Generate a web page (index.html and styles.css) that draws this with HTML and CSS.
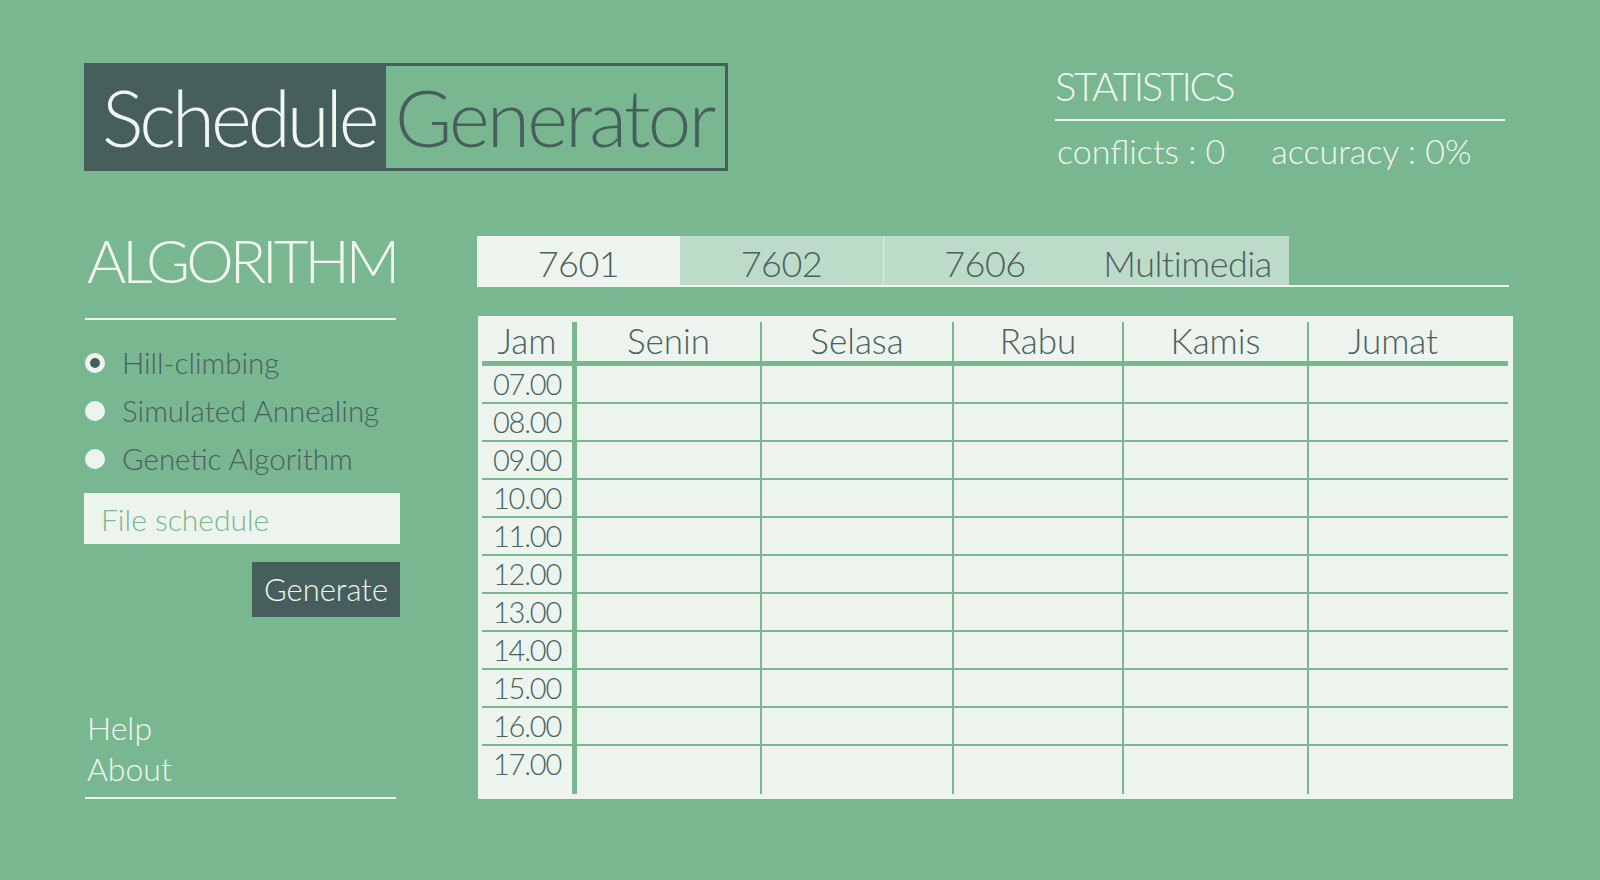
FILE: index.html
```html
<!DOCTYPE html>
<html lang="id">
<head>
<meta charset="utf-8">
<title>Schedule Generator</title>
<link rel="stylesheet" href="styles.css">
</head>
<body>
<header class="topbar">
  <div class="brand">
    <span class="brand-dark">Schedule</span>
    <span class="brand-light">Generator</span>
  </div>
  <section class="stats">
    <h2 class="stats-title">STATISTICS</h2>
    <div class="stats-values">
      <span class="stat">conflicts : 0</span>
      <span class="stat">accuracy : 0%</span>
    </div>
  </section>
</header>

<main class="main">
  <aside class="sidebar">
    <h1 class="algo-title">ALGORITHM</h1>
    <ul class="radio-list">
      <li class="radio-item"><span class="radio checked"></span><span class="radio-label">Hill-climbing</span></li>
      <li class="radio-item"><span class="radio"></span><span class="radio-label">Simulated Annealing</span></li>
      <li class="radio-item"><span class="radio"></span><span class="radio-label">Genetic Algorithm</span></li>
    </ul>
    <input class="file-input" type="text" placeholder="File schedule">
    <div class="btn-row"><button class="generate-btn">Generate</button></div>
    <nav class="bottom-links">
      <a class="link">Help</a>
      <a class="link">About</a>
    </nav>
  </aside>

  <section class="content">
    <div class="tabs">
      <div class="tab active">7601</div>
      <div class="tab">7602</div>
      <div class="tab sep">7606</div>
      <div class="tab">Multimedia</div>
    </div>

    <div class="table-card">
      <div class="grid">
        <div class="cell head jam">Jam</div>
        <div class="cell head">Senin</div>
        <div class="cell head">Selasa</div>
        <div class="cell head">Rabu</div>
        <div class="cell head">Kamis</div>
        <div class="cell head last">Jumat</div>

        <div class="cell time jam">07.00</div><div class="cell"></div><div class="cell"></div><div class="cell"></div><div class="cell"></div><div class="cell"></div>
        <div class="cell time jam">08.00</div><div class="cell"></div><div class="cell"></div><div class="cell"></div><div class="cell"></div><div class="cell"></div>
        <div class="cell time jam">09.00</div><div class="cell"></div><div class="cell"></div><div class="cell"></div><div class="cell"></div><div class="cell"></div>
        <div class="cell time jam">10.00</div><div class="cell"></div><div class="cell"></div><div class="cell"></div><div class="cell"></div><div class="cell"></div>
        <div class="cell time jam">11.00</div><div class="cell"></div><div class="cell"></div><div class="cell"></div><div class="cell"></div><div class="cell"></div>
        <div class="cell time jam">12.00</div><div class="cell"></div><div class="cell"></div><div class="cell"></div><div class="cell"></div><div class="cell"></div>
        <div class="cell time jam">13.00</div><div class="cell"></div><div class="cell"></div><div class="cell"></div><div class="cell"></div><div class="cell"></div>
        <div class="cell time jam">14.00</div><div class="cell"></div><div class="cell"></div><div class="cell"></div><div class="cell"></div><div class="cell"></div>
        <div class="cell time jam">15.00</div><div class="cell"></div><div class="cell"></div><div class="cell"></div><div class="cell"></div><div class="cell"></div>
        <div class="cell time jam">16.00</div><div class="cell"></div><div class="cell"></div><div class="cell"></div><div class="cell"></div><div class="cell"></div>
        <div class="cell time jam">17.00</div><div class="cell"></div><div class="cell"></div><div class="cell"></div><div class="cell"></div><div class="cell"></div>
      </div>
    </div>
  </section>
</main>
</body>
</html>
```

FILE: styles.css
```css
* { box-sizing: border-box; }

html, body {
  margin: 0;
  padding: 0;
}

body {
  width: 1600px;
  height: 880px;
  overflow: hidden;
  background: #79b791;
  font-family: "Lato", "Liberation Sans", sans-serif;
  font-weight: 300;
  color: #4a605e;
}

/* ---------- top bar ---------- */
.topbar {
  display: flex;
  align-items: flex-start;
  padding: 63px 0 0 84px;
}

.brand {
  display: flex;
  width: 644px;
  height: 108px;
  border: 3px solid #465f5c;
}

.brand-dark,
.brand-light {
  font-size: 78px;
  line-height: 102px;
  letter-spacing: -4px;
  white-space: nowrap;
}

.brand-dark {
  width: 299px;
  padding-left: 15px;
  background: #465f5c;
  color: #f2f6f1;
}

.brand-light {
  flex: 1;
  padding-left: 9px;
  letter-spacing: -2.7px;
  color: #465f5c;
}

.stats {
  margin-left: 327px;
  width: 450px;
  color: #f0f5ef;
}

.stats-title {
  margin: 3px 0 0;
  padding-bottom: 13px;
  border-bottom: 2px solid #f0f5ef;
  font-size: 40px;
  line-height: 40px;
  font-weight: 300;
  letter-spacing: -2.4px;
}

.stats-values {
  display: flex;
  gap: 46px;
  margin-top: 13px;
  padding-left: 2px;
}

.stat {
  font-size: 34px;
  line-height: 34px;
}

/* ---------- main ---------- */
.main {
  display: grid;
  grid-template-columns: 316px 1036px;
  column-gap: 77px;
  margin-top: 65px;
  padding-left: 84px;
}

.sidebar {
  display: flex;
  flex-direction: column;
}

.algo-title {
  margin: -3px 4px 0 1px;
  padding: 0 0 31px 2px;
  border-bottom: 2px solid #f0f5ef;
  font-size: 60px;
  line-height: 54px;
  font-weight: 300;
  letter-spacing: -4px;
  color: #f2f6f1;
}

.radio-list {
  list-style: none;
  margin: 19px 0 0;
  padding: 0;
}

.radio-item {
  display: flex;
  align-items: center;
  height: 48px;
}

.radio {
  width: 20px;
  height: 20px;
  margin-left: 1px;
  border-radius: 50%;
  background: #edf4ed;
  flex: none;
}

.radio.checked {
  border: 5px solid #edf4ed;
  background: #465f5c;
}

.radio-label {
  margin-left: 17px;
  font-size: 29.5px;
  line-height: 48px;
  color: #4a605e;
}

.file-input {
  display: block;
  width: 316px;
  height: 51px;
  margin-top: 10px;
  padding: 0 0 0 17px;
  border: none;
  outline: none;
  background: #edf4ed;
  font-family: inherit;
  font-weight: 300;
  font-size: 30px;
  color: #4a605e;
}

.file-input::placeholder {
  color: #79b791;
  opacity: 1;
}

.btn-row {
  display: flex;
  justify-content: flex-end;
  margin-top: 18px;
}

.generate-btn {
  width: 148px;
  height: 55px;
  padding: 0;
  border: none;
  background: #465f5c;
  color: #f2f6f1;
  font-family: inherit;
  font-weight: 300;
  font-size: 31px;
  line-height: 53px;
}

.bottom-links {
  display: flex;
  flex-direction: column;
  margin: auto 4px 0 1px;
  padding: 0 0 8px 2px;
  border-bottom: 2px solid #f0f5ef;
}

.link {
  font-size: 32px;
  line-height: 41px;
  color: #f2f6f1;
}

/* ---------- tabs ---------- */
.content {
  display: flex;
  flex-direction: column;
}

.tabs {
  display: flex;
  width: 1032px;
  border-bottom: 2px solid #f0f5ef;
}

.tab {
  width: 203px;
  height: 49px;
  padding-top: 5px;
  background: #bcdbc8;
  text-align: center;
  font-size: 36px;
  line-height: 44px;
  letter-spacing: -0.5px;
  color: #4a605e;
}

.tab.active {
  background: #edf4ed;
}

.tab.sep {
  border-left: 1px solid #dcece2;
}

/* ---------- table ---------- */
.table-card {
  width: 1035px;
  margin: 29px 0 0 1px;
  padding: 6px 5px 5px 4px;
  background: #edf4ed;
}

.grid {
  display: grid;
  grid-template-columns: 93px 183px 190px 168px 183px 199px;
  grid-template-rows: 42px repeat(10, 36px) 48px;
  column-gap: 2px;
  row-gap: 2px;
  background: #79b791;
}

.cell {
  background: #edf4ed;
}

.cell.jam {
  border-right: 3px solid #79b791;
}

.cell.head {
  border-bottom: 3px solid #79b791;
  text-align: center;
  font-size: 35px;
  line-height: 37px;
  color: #4a605e;
}

.cell.head.last {
  padding-right: 31px;
}

.cell.time {
  text-align: center;
  font-size: 29px;
  line-height: 36px;
  letter-spacing: -1.2px;
  color: #4a605e;
}
```
